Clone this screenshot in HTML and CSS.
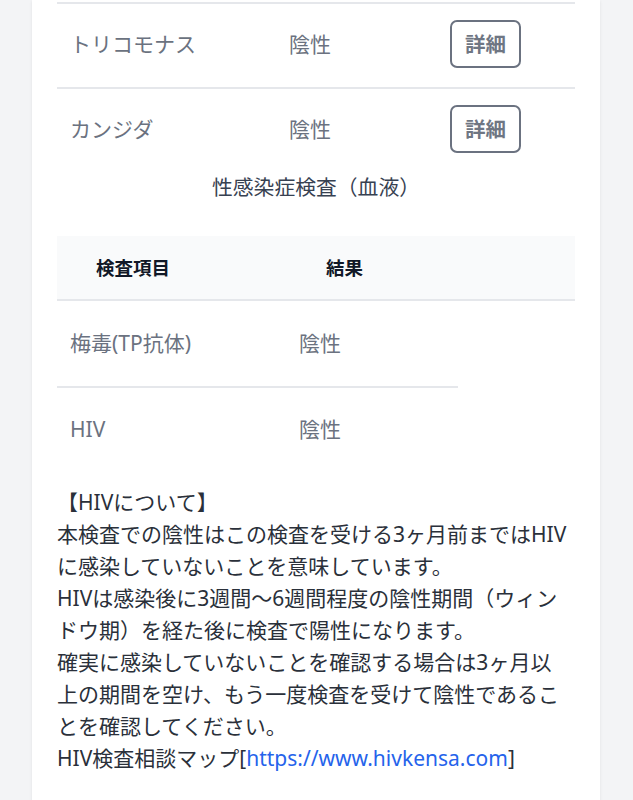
FILE: index.html
```html
<!DOCTYPE html>
<html lang="ja">
<head>
<meta charset="utf-8">
<title>検査結果</title>
<link rel="stylesheet" href="styles.css">
</head>
<body>
<div class="card">
  <div class="table1">
    <div class="row1">
      <div class="cell">トリコモナス</div>
      <div class="cell">陰性</div>
      <div class="cell"><button class="btn">詳細</button></div>
    </div>
    <div class="row1">
      <div class="cell">カンジダ</div>
      <div class="cell">陰性</div>
      <div class="cell"><button class="btn">詳細</button></div>
    </div>
  </div>
  <h2 class="heading">性感染症検査（血液）</h2>
  <div class="table2">
    <div class="thead">
      <div class="th">検査項目</div>
      <div class="th">結果</div>
      <div class="th"></div>
    </div>
    <div class="row2">
      <div class="cell">梅毒(TP抗体)</div>
      <div class="cell">陰性</div>
    </div>
    <div class="row2 last">
      <div class="cell">HIV</div>
      <div class="cell">陰性</div>
    </div>
  </div>
  <p class="note">【HIVについて】<br>本検査での陰性はこの検査を受ける3ヶ月前まではHIVに感染していないことを意味しています。<br>HIVは感染後に3週間〜6週間程度の陰性期間（ウィンドウ期）を経た後に検査で陽性になります。<br>確実に感染していないことを確認する場合は3ヶ月以上の期間を空け、もう一度検査を受けて陰性であることを確認してください。<br>HIV検査相談マップ[<a class="link" href="#">https://www.hivkensa.com</a>]</p>
</div>
</body>
</html>
```
FILE: styles.css
```css
html, body {
  margin: 0;
  padding: 0;
}
body {
  background: #f3f4f6;
  font-family: "Noto Sans", "Noto Sans CJK JP", sans-serif;
  color: #374151;
}
.card {
  margin-left: 32px;
  width: 568px;
  box-sizing: border-box;
  padding: 2px 25px 40px;
  background: #ffffff;
  box-shadow: 0 1px 3px rgba(0, 0, 0, 0.08);
  min-height: 820px;
}
.table1 {
  display: flex;
  flex-direction: column;
}
.row1 {
  display: grid;
  grid-template-columns: 219px 161px 1fr;
  align-items: center;
  height: 85px;
  box-sizing: border-box;
  border-top: 2px solid #e5e7eb;
  padding-bottom: 3px;
}
.cell {
  padding: 0 13px;
  font-size: 21px;
  line-height: 30px;
  color: #6b7280;
}
.btn {
  font-family: "Noto Sans", "Noto Sans CJK JP", sans-serif;
  font-size: 20.5px;
  font-weight: 700;
  line-height: 28px;
  color: #6f7683;
  background: #ffffff;
  border: 2px solid #6b7280;
  border-radius: 7px;
  padding: 8px 13px;
  margin: 0;
  display: block;
}
.heading {
  margin: 0;
  text-align: center;
  font-size: 20.8px;
  font-weight: 400;
  line-height: 31px;
  color: #374151;
}
.table2 {
  margin-top: 33px;
  display: flex;
  flex-direction: column;
}
.thead {
  display: grid;
  grid-template-columns: 230px 171px 1fr;
  align-items: center;
  height: 65px;
  box-sizing: border-box;
  background: #f9fafb;
  border-bottom: 2px solid #e5e7eb;
}
.th {
  padding-left: 39px;
  font-size: 18.5px;
  font-weight: 700;
  color: #111827;
  line-height: 28px;
}
.row2 {
  display: grid;
  grid-template-columns: 229px 172px;
  width: 401px;
  align-items: center;
  height: 87px;
  box-sizing: border-box;
  border-bottom: 2px solid #e5e7eb;
  padding-bottom: 2px;
}
.row2.last {
  border-bottom: none;
  height: 83px;
}
.note {
  margin: 15px 0 0;
  padding-right: 4px;
  font-size: 21px;
  line-height: 32px;
  color: #2a303a;
}
.link {
  color: #2563eb;
  text-decoration: none;
}
```
